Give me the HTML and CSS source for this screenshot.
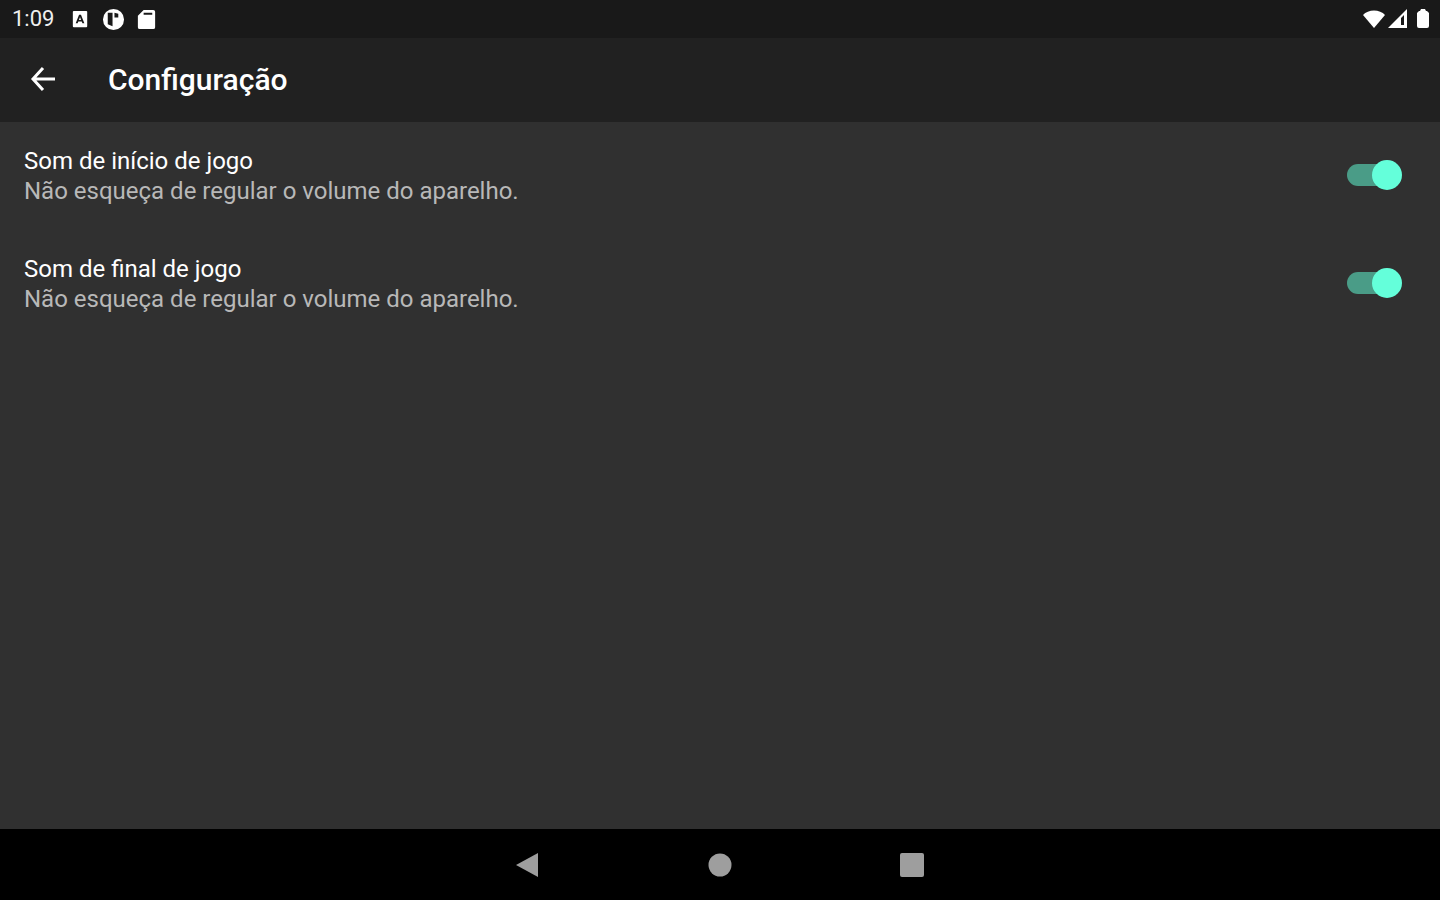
FILE: index.html
```html
<!DOCTYPE html>
<html lang="pt-BR">
<head>
    <meta charset="UTF-8">
    <meta name="viewport" content="width=device-width, initial-scale=1.0">
    <title>Configuração</title>
    <link rel="stylesheet" href="styles.css">
</head>
<body>
    <div class="status-bar">
        <div class="status-left">
            <span class="clock">1:09</span>
            <svg class="status-icon" viewBox="0 0 24 24" aria-hidden="true">
                <path fill-rule="evenodd" d="M5 3h13a1 1 0 0 1 1 1v15a1 1 0 0 1-1 1H5a1 1 0 0 1-1-1V4a1 1 0 0 1 1-1zM10.500 7L7 16h2l.7-2h3.600l.7 2h2L12.500 7zM11.500 9.500l1.100 3h-2.200z"/>
            </svg>
            <svg class="status-icon" viewBox="0 0 24 24" aria-hidden="true">
                <path fill-rule="evenodd" d="M12 1a11 11 0 1 1 0 22a11 11 0 0 1 0-22zM6 5v12l5 2V5zM13 5v5h4V6z"/>
            </svg>
            <svg class="status-icon" viewBox="0 0 24 24" aria-hidden="true">
                <path fill-rule="evenodd" d="M9 2h10a2 2 0 0 1 2 2v16a2 2 0 0 1-2 2H5a2 2 0 0 1-2-2V8zM9 5v2h9V5z"/>
            </svg>
        </div>
        <div class="status-right">
            <svg width="24" height="20" viewBox="0 0 24 20" aria-hidden="true">
                <path d="M12 19L1 6C6 0 18 0 23 6z"/>
            </svg>
            <svg width="20" height="20" viewBox="0 0 20 20" aria-hidden="true">
                <path fill-rule="evenodd" d="M0 19L19 0v19zM13 9v7h3V6z"/>
            </svg>
            <svg class="battery" width="14" height="20" viewBox="0 0 14 20" aria-hidden="true">
                <path d="M5 0h4l1 2h1l2 2v13a2 2 0 0 1-2 2H3a2 2 0 0 1-2-2V4l2-2h1z"/>
            </svg>
        </div>
    </div>

    <header class="toolbar">
        <button class="back-button" type="button" aria-label="Voltar">
            <svg width="36" height="36" viewBox="0 0 36 36" aria-hidden="true">
                <path d="M31 17H9M19 6L9 17l10 11"/>
            </svg>
        </button>
        <h1 class="title">Configuração</h1>
    </header>

    <main class="settings">
        <label class="setting" for="som-inicio">
            <span class="setting-text">
                <span class="setting-name">Som de início de jogo</span>
                <span class="setting-summary">Não esqueça de regular o volume do aparelho.</span>
            </span>
            <input class="switch" type="checkbox" id="som-inicio" checked>
        </label>
        <label class="setting" for="som-final">
            <span class="setting-text">
                <span class="setting-name">Som de final de jogo</span>
                <span class="setting-summary">Não esqueça de regular o volume do aparelho.</span>
            </span>
            <input class="switch" type="checkbox" id="som-final" checked>
        </label>
    </main>

    <nav class="nav-bar">
        <button class="nav-button" type="button" aria-label="Voltar">
            <svg width="24" height="26" viewBox="0 0 24 26" aria-hidden="true">
                <path d="M22 1v24L0 13z"/>
            </svg>
        </button>
        <button class="nav-button" type="button" aria-label="Início">
            <svg width="24" height="24" viewBox="0 0 24 24" aria-hidden="true">
                <circle cx="12" cy="12" r="11.500"/>
            </svg>
        </button>
        <button class="nav-button" type="button" aria-label="Recentes">
            <svg width="24" height="24" viewBox="0 0 24 24" aria-hidden="true">
                <rect width="24" height="24" rx="2"/>
            </svg>
        </button>
    </nav>
</body>
</html>
```
FILE: styles.css
```css
* {
    margin: 0;
    padding: 0;
    box-sizing: border-box;
}

body {
    display: flex;
    flex-direction: column;
    min-height: 100vh;
    font-family: Roboto, sans-serif;
    background: #303030;
    color: #ffffff;
}

svg {
    display: block;
    fill: currentColor;
}

button {
    border: none;
    background: none;
    cursor: pointer;
}

/* Status bar */
.status-bar {
    display: flex;
    align-items: center;
    justify-content: space-between;
    height: 38px;
    padding: 0 10px 0 12px;
    background: #191919;
}

.status-left {
    display: flex;
    align-items: center;
    gap: 10px;
}

.clock {
    margin-right: 5px;
    font-size: 22px;
    line-height: 24px;
    color: #eeeeee;
}

.status-icon {
    width: 23px;
    height: 23px;
}

.status-right {
    display: flex;
    align-items: center;
    gap: 2px;
}

.battery {
    margin-left: 6px;
}

/* Toolbar */
.toolbar {
    display: flex;
    align-items: center;
    height: 84px;
    padding: 0 24px;
    background: #212121;
}

.back-button {
    color: #ffffff;
}

.back-button svg {
    fill: none;
    stroke: currentColor;
    stroke-width: 3;
}

.title {
    margin-left: 48px;
    font-size: 30px;
    line-height: 36px;
    font-weight: 500;
}

/* Settings list */
.settings {
    flex: 1;
}

.setting {
    display: flex;
    align-items: center;
    justify-content: space-between;
    height: 108px;
    padding: 0 38px 0 24px;
    cursor: pointer;
}

.setting-text {
    display: flex;
    flex-direction: column;
    font-size: 24px;
    line-height: 30px;
}

.setting-summary {
    color: #b8b8b8;
}

/* The track and the thumb share one grid cell */
.switch {
    appearance: none;
    display: grid;
    align-items: center;
    width: 55px;
    height: 30px;
    margin-bottom: 2px;
    cursor: pointer;
}

.switch::before,
.switch::after {
    content: '';
    grid-area: 1 / 1;
}

.switch::before {
    height: 22px;
    margin-right: 4px;
    border-radius: 11px;
    background: #646464;
}

.switch::after {
    width: 30px;
    height: 30px;
    border-radius: 50%;
    background: #b9b9b9;
}

.switch:checked::before {
    background: #4a9c87;
}

.switch:checked::after {
    justify-self: end;
    background: #64ffda;
}

/* Navigation bar */
.nav-bar {
    display: flex;
    align-items: center;
    justify-content: center;
    height: 71px;
    background: #000000;
}

.nav-button {
    display: flex;
    align-items: center;
    justify-content: center;
    width: 192px;
    height: 71px;
    color: #9e9e9e;
}
```
